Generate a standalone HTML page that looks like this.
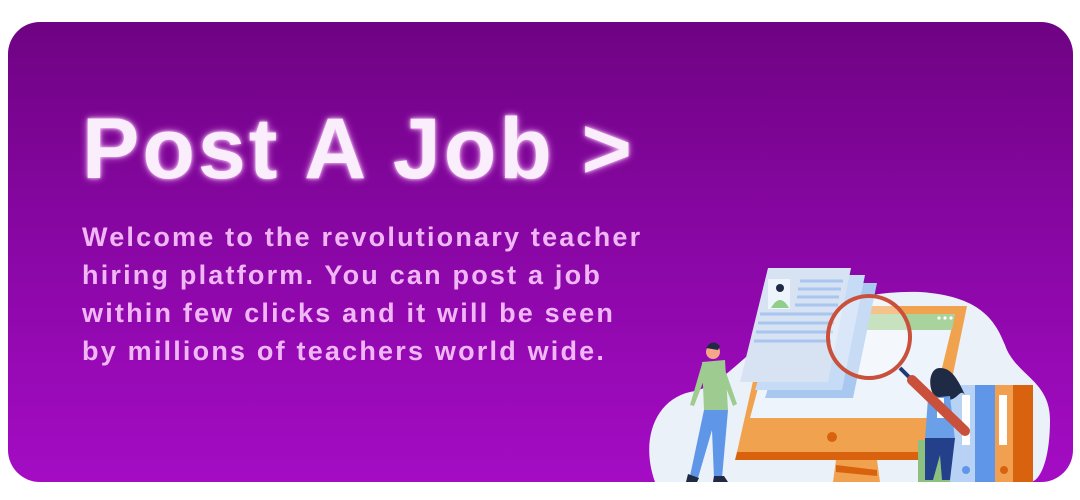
<!DOCTYPE html>
<html><head><meta charset="utf-8"><style>
html,body{margin:0;padding:0;background:#fff;width:1080px;height:500px;overflow:hidden}
.card{position:absolute;left:8px;top:22px;width:1065px;height:460px;border-radius:32px;background:linear-gradient(180deg,#6f0383 0%,#8a07a6 50%,#a40cc4 100%);overflow:hidden}
h1{position:absolute;left:74px;top:78px;margin:0;font-family:"Liberation Sans",sans-serif;font-weight:700;font-size:86px;letter-spacing:3px;color:#fbeefc;text-shadow:0 0 8px rgba(255,200,255,.8),0 0 3px rgba(255,220,255,.9);white-space:nowrap}
p{position:absolute;left:74px;top:196px;margin:0;font-family:"Liberation Sans",sans-serif;font-weight:700;font-size:27px;line-height:38px;letter-spacing:2.2px;color:#f1b6f6;width:700px;white-space:nowrap}
svg{position:absolute;left:0;top:0}
</style></head><body>
<div class="card">
<h1>Post A Job &gt;</h1>
<p>Welcome to the revolutionary teacher<br>hiring platform. You can post a job<br>within few clicks and it will be seen<br>by millions of teachers world wide.</p>
</div>
<svg width="1080" height="500" viewBox="0 0 1080 500">
<defs><clipPath id="c"><rect x="8" y="22" width="1065" height="460" rx="32"/></clipPath></defs>
<g clip-path="url(#c)">
<path d="M655 482 C640 440 655 400 690 392 C715 388 730 370 760 345 C800 310 860 290 920 292 C980 296 995 320 1005 345 C1015 375 1050 380 1050 420 C1050 460 1040 482 1030 482 Z" fill="#eaf1f9"/>
<path d="M770 306 L967 306 L937 452 L737 452 Z" fill="#f0a24e"/>
<path d="M778 314 L955 314 L930 418 L750 418 Z" fill="#eef4fb"/>
<path d="M870 314 L955 314 L952 330 L866 330 Z" fill="#a8d39c"/>
<circle cx="939" cy="318" r="1.6" fill="#fff"/><circle cx="945" cy="318" r="1.6" fill="#fff"/><circle cx="951" cy="318" r="1.6" fill="#fff"/>
<path d="M737 452 L937 452 L935 460 L735 460 Z" fill="#d9620f"/>
<circle cx="832" cy="437" r="5" fill="#d9620f"/>
<path d="M836 460 L877 460 L880 482 L833 482 Z" fill="#f0a24e"/>
<path d="M836 465 L877 470 L877 476 L836 472 Z" fill="#d9620f"/>
<path d="M800 283 L877 283 L853 398 L765 398 Z" fill="#a9c8f0"/>
<path d="M790 275 L865 275 L842 390 L755 390 Z" fill="#c5dbf6"/>
<path d="M768 268 L851 268 L828 382 L740 382 Z" fill="#d7e3f3"/>
<rect x="768" y="279" width="22" height="30" fill="#eef4fb"/>
<circle cx="780" cy="288" r="4" fill="#1f2a44"/>
<path d="M771 308 Q780 292 789 308 Z" fill="#8fcf8a"/>
<g stroke="#a8c6ef" stroke-width="3">
<line x1="800" y1="281" x2="843" y2="281"/><line x1="798" y1="289" x2="841" y2="289"/><line x1="797" y1="297" x2="839" y2="297"/><line x1="795" y1="305" x2="838" y2="305"/>
<line x1="760" y1="314" x2="836" y2="314"/><line x1="758" y1="323" x2="834" y2="323"/><line x1="756" y1="332" x2="833" y2="332"/><line x1="754" y1="341" x2="831" y2="341"/>
</g>
<circle cx="869" cy="337" r="41" fill="rgba(255,255,255,.35)" stroke="#c9503b" stroke-width="4"/>
<line x1="900" y1="368" x2="910" y2="378" stroke="#1f3a7a" stroke-width="4"/>
<rect x="950" y="385" width="25" height="97" fill="#b8d2f5"/>
<rect x="975" y="385" width="20" height="97" fill="#5f96e8"/>
<rect x="995" y="385" width="18" height="97" fill="#f0a050"/>
<rect x="1013" y="385" width="20" height="97" fill="#d9620f"/>
<rect x="962" y="395" width="8" height="50" fill="#fff"/><rect x="999" y="395" width="8" height="50" fill="#fff"/>
<circle cx="966" cy="470" r="4" fill="#5f96e8"/><circle cx="1004" cy="470" r="4" fill="#d9620f"/>
<rect x="918" y="440" width="32" height="42" fill="#8cc07e"/>
<path d="M940 368 C928 368 928 390 935 396 L948 400 C958 400 960 388 965 395 C958 380 952 368 940 368 Z" fill="#1f2a44"/>
<path d="M928 398 L950 396 L955 440 L925 440 Z" fill="#6aa0e8"/>
<rect x="937" y="398" width="7" height="20" fill="#fff"/>
<path d="M925 438 L955 438 L950 480 L942 480 L940 455 L933 480 L925 480 Z" fill="#24408a"/>
<line x1="912" y1="380" x2="965" y2="431" stroke="#c9503b" stroke-width="10" stroke-linecap="round"/>
<circle cx="713" cy="352" r="7" fill="#f4a58a"/>
<path d="M706 348 Q712 338 720 346 L718 350 Z" fill="#1f2a44"/>
<path d="M702 362 L725 360 L728 410 L704 410 Z" fill="#9ecb90"/>
<path d="M702 364 L690 405 L694 406 L707 372 Z" fill="#9ecb90"/>
<path d="M723 364 L737 404 L733 406 L720 372 Z" fill="#9ecb90"/>
<path d="M704 410 L728 410 L722 478 L714 478 L712 430 L698 478 L690 476 Z" fill="#5f96e8"/>
<path d="M688 474 L699 478 L697 482 L686 482 Z" fill="#1f2a44"/>
<path d="M714 476 L724 476 L728 482 L713 482 Z" fill="#1f2a44"/>
</g>
</svg>
</body></html>
